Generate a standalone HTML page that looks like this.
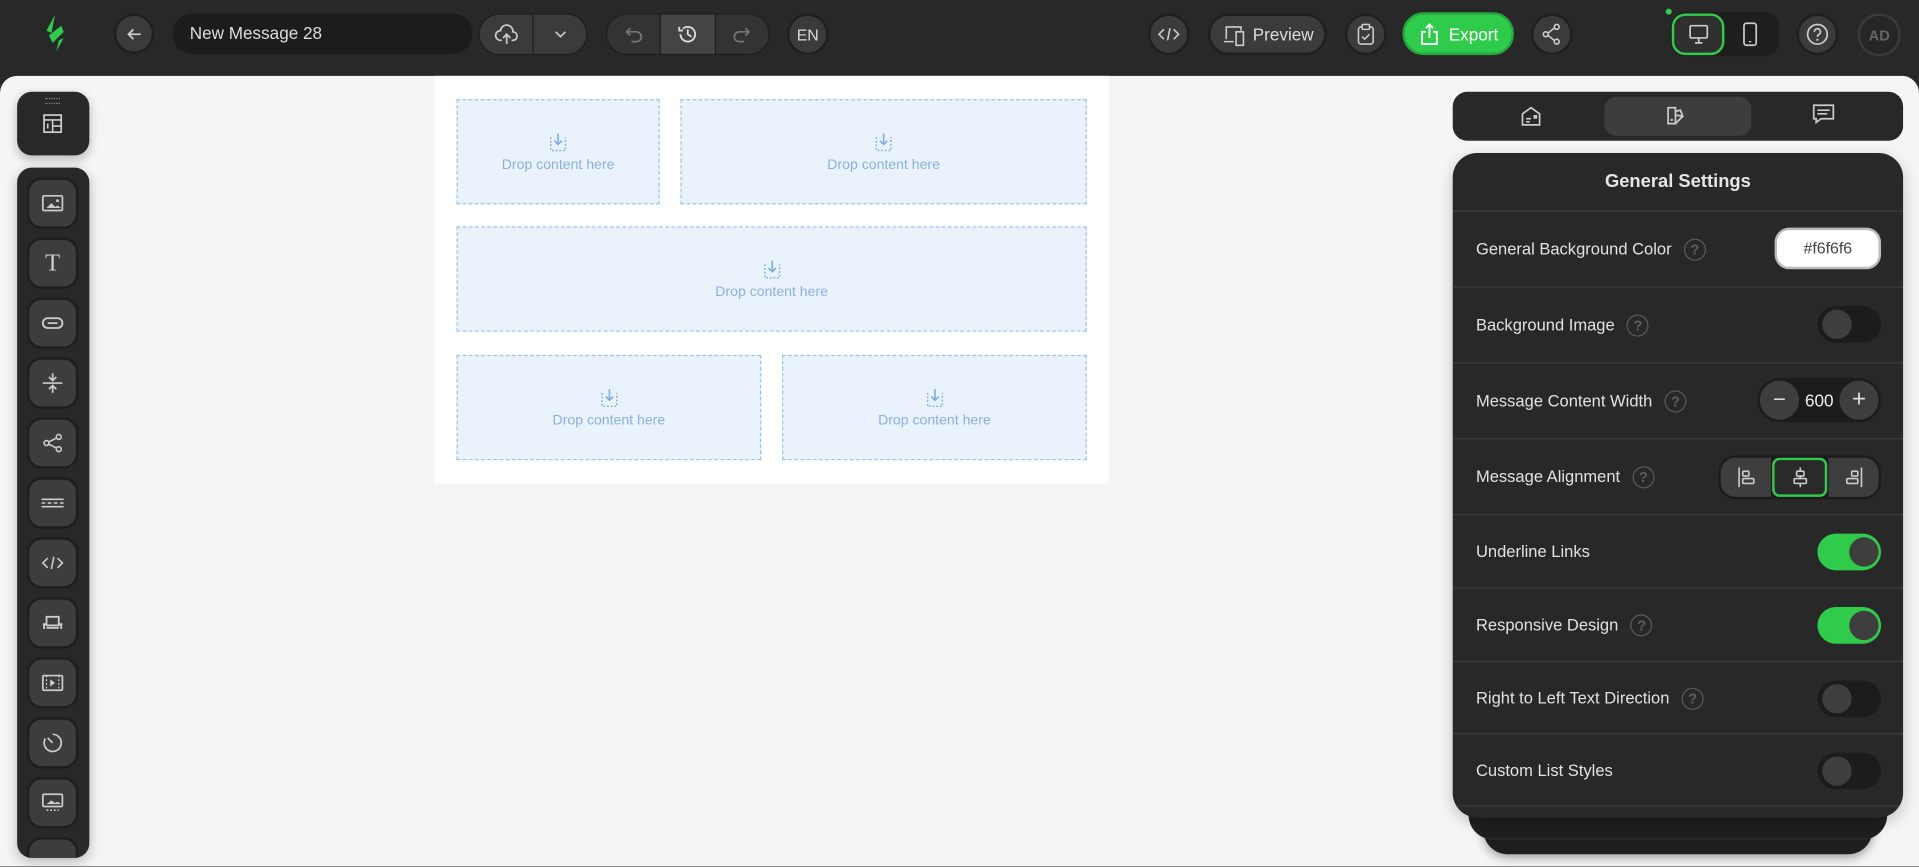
<!DOCTYPE html>
<html><head><meta charset="utf-8"><style>
*{box-sizing:border-box;margin:0;padding:0}
html,body{width:1919px;height:867px;overflow:hidden;background:#282828;font-family:"Liberation Sans",sans-serif}
#w{position:absolute;left:0;top:0;width:1568px;height:708px;transform:scale(1.22385);transform-origin:0 0;background:#282828}
.a{position:absolute}
.btn{position:absolute;background:#3b3b3b;border:2px solid #1f1f1f;border-radius:17px;display:flex;align-items:center;justify-content:center;color:#ddd;font-size:14px}
.grp{position:absolute;background:#1e1e1e;border-radius:18px;display:flex;padding:1px;gap:1px}
.grp>div{background:#3b3b3b;display:flex;align-items:center;justify-content:center}
svg{display:block}
.drop{position:absolute;background:#eaf2fc;border:1px dashed #9cc3ee;display:flex;flex-direction:column;align-items:center;justify-content:center;color:#8ab0e0;font-size:11.5px}
.drop svg{margin-bottom:5px}
.tb{position:absolute;left:22px;width:42px;height:42px;background:#3d3d3d;border:2px solid #1e1e1e;border-radius:12px;display:flex;align-items:center;justify-content:center}
.row{position:absolute;left:0;right:0;border-top:1px solid #3c3c3c;display:flex;align-items:center;padding-left:19px;color:#e2e2e2;font-size:13.5px}
.q{display:inline-flex;width:18px;height:18px;border:1.5px solid #5a5a5a;border-radius:50%;color:#5f5f5f;font-size:12px;align-items:center;justify-content:center;margin-left:10px;font-weight:bold}
.tog{position:absolute;right:18px;width:52px;height:30px;border-radius:15px;background:#1c1c1c}
.tog:after{content:"";position:absolute;left:4px;top:3px;width:24px;height:24px;border-radius:50%;background:#3e3e3e}
.tog.on{background:#2fcc4c}
.tog.on:after{left:26px}
</style></head><body><div id="w">
<svg class="a" style="left:34px;top:11px" width="22" height="32" viewBox="0 0 22 32"><path d="M11 1 L4 14 L8 16 Z M16 10 L6 18 L9 24 L18 15 Z M14 22 L12 31 L18 20 Z" fill="#2fcc4c"/></svg>
<div class="btn" style="left:93px;top:11px;width:33px;height:33px"><svg width="14" height="14" viewBox="0 0 14 14"><path d="M12 7H2M6 3L2 7l4 4" stroke="#ccc" stroke-width="1.5" fill="none"/></svg></div>
<div class="a" style="left:141px;top:11px;width:245px;height:33px;background:#1c1c1c;border-radius:16px;color:#ddd;font-size:14px;line-height:33px;padding-left:14px">New Message 28</div>
<div class="grp" style="left:391px;top:11px;width:89px;height:34px"><div style="width:43px;border-radius:16px 0 0 16px"><svg width="20" height="18" viewBox="0 0 20 18"><path d="M6 14H5a4 4 0 0 1 0-8 5 5 0 0 1 10 1 3.5 3.5 0 0 1 0 7h-1M10 17V9M7 12l3-3 3 3" stroke="#ccc" stroke-width="1.4" fill="none"/></svg></div><div style="width:43px;border-radius:0 16px 16px 0"><svg width="10" height="6"><path d="M1 1l4 4 4-4" stroke="#ccc" stroke-width="1.4" fill="none"/></svg></div></div>
<div class="grp" style="left:495px;top:11px;width:134px;height:34px"><div style="width:44px;border-radius:16px 0 0 16px;background:#333"><svg width="16" height="16" viewBox="0 0 16 16"><path d="M5 3L2 6l3 3M2 6h8a4 4 0 0 1 0 8H6" stroke="#777" stroke-width="1.4" fill="none"/></svg></div><div style="width:44px;background:#444"><svg width="18" height="18" viewBox="0 0 18 18"><path d="M3 9a6 6 0 1 0 2-4.5M2 3v3h3M9 5v4l3 2" stroke="#ddd" stroke-width="1.5" fill="none"/></svg></div><div style="width:44px;border-radius:0 16px 16px 0;background:#333"><svg width="16" height="16" viewBox="0 0 16 16"><path d="M11 3l3 3-3 3M14 6H6a4 4 0 0 0 0 8h4" stroke="#777" stroke-width="1.4" fill="none"/></svg></div></div>
<div class="btn" style="left:643px;top:11px;width:34px;height:34px;font-size:13px">EN</div>
<div class="btn" style="left:938px;top:11px;width:34px;height:34px"><svg width="18" height="12" viewBox="0 0 18 12"><path d="M5 2L1 6l4 4M13 2l4 4-4 4M10 1L8 11" stroke="#ccc" stroke-width="1.3" fill="none"/></svg></div>
<div class="btn" style="left:987px;top:11px;width:97px;height:34px;gap:6px"><svg width="20" height="20" viewBox="0 0 20 20"><path d="M4 14V4h12v3M2 16h8M12 8h6v11h-6z" stroke="#ccc" stroke-width="1.3" fill="none"/></svg>Preview</div>
<div class="btn" style="left:1099px;top:11px;width:34px;height:34px"><svg width="16" height="18" viewBox="0 0 16 18"><rect x="2" y="3" width="12" height="14" rx="2" stroke="#ccc" stroke-width="1.3" fill="none"/><rect x="5" y="1" width="6" height="4" rx="1" stroke="#ccc" stroke-width="1.3" fill="#3b3b3b"/><path d="M5 11l2 2 4-4" stroke="#ccc" stroke-width="1.3" fill="none"/></svg></div>
<div class="btn" style="left:1146px;top:10px;width:91px;height:35px;background:#2fcc4c;border-color:#24a83d;color:#fff;gap:7px;font-size:14px"><svg width="18" height="20" viewBox="0 0 18 20"><path d="M6 8H3v10h12V8h-3M9 13V2M6 5l3-3 3 3" stroke="#fff" stroke-width="1.5" fill="none"/></svg>Export</div>
<div class="btn" style="left:1251px;top:11px;width:34px;height:34px"><svg width="16" height="18" viewBox="0 0 16 18"><circle cx="12" cy="3" r="2" stroke="#ccc" fill="none" stroke-width="1.3"/><circle cx="3" cy="9" r="2" stroke="#ccc" fill="none" stroke-width="1.3"/><circle cx="12" cy="15" r="2" stroke="#ccc" fill="none" stroke-width="1.3"/><path d="M5 8l5-4M5 10l5 4" stroke="#ccc" stroke-width="1.3"/></svg></div>
<div class="a" style="left:1361px;top:7px;width:5px;height:5px;border-radius:50%;background:#2fcc4c"></div>
<div class="a" style="left:1365px;top:10px;width:89px;height:36px;background:#1e1e1e;border-radius:12px"></div>
<div class="a" style="left:1366px;top:11px;width:43px;height:34px;background:#303030;border:2px solid #2fcc4c;border-radius:11px;display:flex;align-items:center;justify-content:center"><svg width="18" height="18" viewBox="0 0 18 18"><rect x="2" y="2" width="14" height="10" rx="1" stroke="#ccc" stroke-width="1.4" fill="none"/><path d="M9 12v4M6 16h6" stroke="#ccc" stroke-width="1.4"/></svg></div>
<svg class="a" style="left:1424px;top:18px" width="12" height="20" viewBox="0 0 12 20"><rect x="1" y="1" width="10" height="18" rx="2" stroke="#ccc" stroke-width="1.4" fill="none"/><path d="M5 16h2" stroke="#ccc"/></svg>
<div class="btn" style="left:1468px;top:11px;width:34px;height:34px"><svg width="20" height="20" viewBox="0 0 20 20"><circle cx="10" cy="10" r="8" stroke="#ccc" stroke-width="1.4" fill="none"/><path d="M7.5 8a2.5 2.5 0 1 1 3.5 2.3c-.7.3-1 .8-1 1.7" stroke="#ccc" stroke-width="1.4" fill="none"/><circle cx="10" cy="14.5" r=".9" fill="#ccc"/></svg></div>
<div class="btn" style="left:1518px;top:11px;width:35px;height:35px;background:#262626;border-color:#3a3a3a;color:#666;font-weight:bold;font-size:12px">AD</div>

<div class="a" style="left:0;top:62px;width:1568px;height:646px;background:#f5f5f5;border-radius:14px 14px 0 0"></div>
<div class="a" style="left:355px;top:62px;width:551px;height:333px;background:#fff"></div>
<div class="drop" style="left:373px;top:81px;width:166px;height:86px"><svg width="16" height="16" viewBox="0 0 16 16"><path d="M8 1v9M5 7l3 3 3-3" stroke="#7aaee8" stroke-width="1.3" fill="none"/><path d="M2 4v11h12V4" stroke="#7aaee8" stroke-width="1.2" stroke-dasharray="1.5 1.5" fill="none"/></svg>Drop content here</div>
<div class="drop" style="left:556px;top:81px;width:332px;height:86px"><svg width="16" height="16" viewBox="0 0 16 16"><path d="M8 1v9M5 7l3 3 3-3" stroke="#7aaee8" stroke-width="1.3" fill="none"/><path d="M2 4v11h12V4" stroke="#7aaee8" stroke-width="1.2" stroke-dasharray="1.5 1.5" fill="none"/></svg>Drop content here</div>
<div class="drop" style="left:373px;top:185px;width:515px;height:86px"><svg width="16" height="16" viewBox="0 0 16 16"><path d="M8 1v9M5 7l3 3 3-3" stroke="#7aaee8" stroke-width="1.3" fill="none"/><path d="M2 4v11h12V4" stroke="#7aaee8" stroke-width="1.2" stroke-dasharray="1.5 1.5" fill="none"/></svg>Drop content here</div>
<div class="drop" style="left:373px;top:290px;width:249px;height:86px"><svg width="16" height="16" viewBox="0 0 16 16"><path d="M8 1v9M5 7l3 3 3-3" stroke="#7aaee8" stroke-width="1.3" fill="none"/><path d="M2 4v11h12V4" stroke="#7aaee8" stroke-width="1.2" stroke-dasharray="1.5 1.5" fill="none"/></svg>Drop content here</div>
<div class="drop" style="left:639px;top:290px;width:249px;height:86px"><svg width="16" height="16" viewBox="0 0 16 16"><path d="M8 1v9M5 7l3 3 3-3" stroke="#7aaee8" stroke-width="1.3" fill="none"/><path d="M2 4v11h12V4" stroke="#7aaee8" stroke-width="1.2" stroke-dasharray="1.5 1.5" fill="none"/></svg>Drop content here</div>

<div class="a" style="left:14px;top:75px;width:59px;height:52px;background:#282828;border-radius:12px;box-shadow:0 3px 8px rgba(0,0,0,.25)"><div style="position:absolute;left:23px;top:5px;width:12px;height:5px;border-top:1.5px dotted #888;border-bottom:1.5px dotted #888"></div><svg style="position:absolute;left:20px;top:17px" width="18" height="18" viewBox="0 0 18 18"><rect x="2" y="2" width="14" height="14" stroke="#ccc" stroke-width="1.4" fill="none"/><path d="M2 6h14M9 6v10M9 11h7M5 9v4" stroke="#ccc" stroke-width="1.3"/></svg></div>
<div class="a" style="left:14px;top:137px;width:59px;height:564px;background:#282828;border-radius:12px;box-shadow:0 3px 10px rgba(0,0,0,.25);overflow:hidden">
<div class="tb" style="left:8px;top:8px"><svg width="20" height="16" viewBox="0 0 20 16"><rect x="2" y="2" width="16" height="12" rx="1" stroke="#ccc" stroke-width="1.4" fill="none"/><path d="M5 12l4-4 3 3 2-1 3 2z" fill="#ccc"/><circle cx="14" cy="6" r="1.2" fill="#ccc"/></svg></div>
<div class="tb" style="left:8px;top:57px;color:#ccc;font-family:'Liberation Serif',serif;font-size:20px">T</div>
<div class="tb" style="left:8px;top:106px"><svg width="20" height="12" viewBox="0 0 20 12"><rect x="2" y="2" width="16" height="8" rx="4" stroke="#ccc" stroke-width="1.5" fill="none"/><path d="M6 6h8" stroke="#ccc" stroke-width="1.4"/></svg></div>
<div class="tb" style="left:8px;top:155px"><svg width="20" height="20" viewBox="0 0 20 20"><path d="M2 10h16M10 2v5M7 5l3 3 3-3M10 18v-5M7 15l3-3 3 3" stroke="#ccc" stroke-width="1.4" fill="none"/></svg></div>
<div class="tb" style="left:8px;top:204px"><svg width="18" height="18" viewBox="0 0 18 18"><circle cx="14" cy="4" r="2" stroke="#ccc" fill="none" stroke-width="1.3"/><circle cx="4" cy="9" r="2" stroke="#ccc" fill="none" stroke-width="1.3"/><circle cx="14" cy="14" r="2" stroke="#ccc" fill="none" stroke-width="1.3"/><path d="M6 8l6-3M6 10l6 3" stroke="#ccc" stroke-width="1.3"/></svg></div>
<div class="tb" style="left:8px;top:253px"><svg width="22" height="12" viewBox="0 0 22 12"><path d="M2 3h18M2 9h18" stroke="#ccc" stroke-width="1.3"/><path d="M2 6h18" stroke="#ccc" stroke-width="1.3" stroke-dasharray="3 2"/></svg></div>
<div class="tb" style="left:8px;top:302px"><svg width="18" height="12" viewBox="0 0 18 12"><path d="M5 2L1 6l4 4M13 2l4 4-4 4M10 1L8 11" stroke="#ccc" stroke-width="1.3" fill="none"/></svg></div>
<div class="tb" style="left:8px;top:351px"><svg width="20" height="16" viewBox="0 0 20 16"><path d="M5 3h10v7H5zM2 9h3M15 9h3M3 9v4M17 9v4M5 12h10" stroke="#ccc" stroke-width="1.5" fill="none"/></svg></div>
<div class="tb" style="left:8px;top:400px"><svg width="20" height="16" viewBox="0 0 20 16"><rect x="2" y="2" width="16" height="12" rx="1" stroke="#ccc" stroke-width="1.4" fill="none"/><path d="M5 2v12M15 2v12" stroke="#ccc" stroke-width="1" stroke-dasharray="1.5 1.5"/><path d="M8 5l4 3-4 3z" fill="#ccc"/></svg></div>
<div class="tb" style="left:8px;top:449px"><svg width="18" height="18" viewBox="0 0 18 18"><path d="M9 2a7 7 0 1 1-6 3.5" stroke="#ccc" stroke-width="1.4" fill="none"/><path d="M5 5l4 4" stroke="#ccc" stroke-width="1.4"/></svg></div>
<div class="tb" style="left:8px;top:498px"><svg width="20" height="18" viewBox="0 0 20 18"><rect x="2" y="2" width="16" height="10" rx="1" stroke="#ccc" stroke-width="1.4" fill="none"/><path d="M5 10l4-3 3 2 2-1 3 2z" fill="#ccc"/><path d="M5 15h10" stroke="#ccc" stroke-width="1.3" stroke-dasharray="1.5 1.5"/></svg></div>
<div class="tb" style="left:8px;top:547px"><svg width="20" height="10"><path d="M3 2l3 2-3 2M9 4h9" stroke="#ccc" stroke-width="1.3" fill="none"/></svg></div>
</div>

<div class="a" style="left:1187px;top:75px;width:368px;height:40px;background:#282828;border-radius:12px"></div>
<div class="a" style="left:1311px;top:79px;width:120px;height:32px;background:#3d3d3d;border-radius:10px"></div>
<svg class="a" style="left:1241px;top:85px" width="20" height="20" viewBox="0 0 20 20"><path d="M3 8l7-5 7 5v9H3z" stroke="#ccc" stroke-width="1.4" fill="none"/><path d="M6 12h4M6 14.5h3" stroke="#ccc" stroke-width="1.3"/><rect x="12" y="9" width="3" height="3" fill="#ccc"/></svg>
<svg class="a" style="left:1360px;top:85px" width="20" height="20" viewBox="0 0 20 20"><path d="M3 3h6v13H3zM9 6l4-1 2 5-6 6M9 9l6 1" stroke="#ccc" stroke-width="1.4" fill="none"/><circle cx="6" cy="13" r="1" fill="#ccc"/></svg>
<svg class="a" style="left:1480px;top:84px" width="20" height="20" viewBox="0 0 20 20"><path d="M2 2h16v11H8l-4 3v-3H2z" stroke="#ccc" stroke-width="1.4" fill="none"/><path d="M5 6h10M5 9h8" stroke="#ccc" stroke-width="1.3"/></svg>

<div class="a" style="left:1212px;top:660px;width:318px;height:38px;background:#1e1e1e;border-radius:0 0 20px 20px;box-shadow:0 3px 8px rgba(0,0,0,.35)"></div>
<div class="a" style="left:1200px;top:655px;width:342px;height:31px;background:#1f1f1f;border-radius:0 0 20px 20px;border-bottom:1px solid #2a2a2a"></div>
<div class="a" style="left:1187px;top:125px;width:368px;height:543px;background:#282828;border-radius:20px;box-shadow:0 4px 12px rgba(0,0,0,.2);overflow:hidden">
<div class="a" style="left:0;right:0;top:15px;text-align:center;color:#e6e6e6;font-size:15px;font-weight:bold">General Settings</div>
<div class="row" style="top:47px;height:62px">General Background Color<span class="q">?</span><div class="a" style="right:18px;top:13px;width:87px;height:34px;background:#fff;border:2px solid #bbb;border-radius:12px;color:#444;font-size:13px;text-align:center;line-height:30px">#f6f6f6</div></div>
<div class="row" style="top:109px;height:62px">Background Image<span class="q">?</span><div class="tog" style="top:15px"></div></div>
<div class="row" style="top:171px;height:62px">Message Content Width<span class="q">?</span><div class="a" style="right:18px;top:12px;width:101px;height:36px;background:#1c1c1c;border-radius:18px"><div class="a" style="left:2px;top:2px;width:32px;height:32px;border-radius:50%;background:#3e3e3e;color:#ddd;text-align:center;line-height:30px;font-size:18px">−</div><div class="a" style="left:34px;width:33px;top:0;line-height:36px;text-align:center;color:#eee;font-size:14px">600</div><div class="a" style="left:67px;top:2px;width:32px;height:32px;border-radius:50%;background:#3e3e3e;color:#ddd;text-align:center;line-height:30px;font-size:20px">+</div></div></div>
<div class="row" style="top:233px;height:62px">Message Alignment<span class="q">?</span><div class="a" style="right:18px;top:13px;width:133px;height:36px;background:#1c1c1c;border-radius:14px;display:flex;padding:2px;gap:1px"><div style="flex:1;background:#3e3e3e;border-radius:12px 0 0 12px;display:flex;align-items:center;justify-content:center"><svg width="16" height="18" viewBox="0 0 16 18"><path d="M2 1v16" stroke="#ccc" stroke-width="1.3"/><rect x="5" y="4" width="5" height="4" rx="1" stroke="#ccc" fill="none" stroke-width="1.3"/><rect x="5" y="10" width="9" height="4" rx="1" stroke="#ccc" fill="none" stroke-width="1.3"/></svg></div><div style="flex:1;background:#2a2a2a;border:2px solid #2fcc4c;border-radius:6px;display:flex;align-items:center;justify-content:center"><svg width="16" height="18" viewBox="0 0 16 18"><path d="M8 1v16" stroke="#ccc" stroke-width="1.3"/><rect x="5" y="4" width="6" height="4" rx="1" stroke="#ccc" fill="#2a2a2a" stroke-width="1.3"/><rect x="3" y="10" width="10" height="4" rx="1" stroke="#ccc" fill="#2a2a2a" stroke-width="1.3"/></svg></div><div style="flex:1;background:#3e3e3e;border-radius:0 12px 12px 0;display:flex;align-items:center;justify-content:center"><svg width="16" height="18" viewBox="0 0 16 18"><path d="M14 1v16" stroke="#ccc" stroke-width="1.3"/><rect x="6" y="4" width="5" height="4" rx="1" stroke="#ccc" fill="none" stroke-width="1.3"/><rect x="2" y="10" width="9" height="4" rx="1" stroke="#ccc" fill="none" stroke-width="1.3"/></svg></div></div></div>
<div class="row" style="top:295px;height:60px">Underline Links<div class="tog on" style="top:15px"></div></div>
<div class="row" style="top:355px;height:60px">Responsive Design<span class="q">?</span><div class="tog on" style="top:15px"></div></div>
<div class="row" style="top:415px;height:60px">Right to Left Text Direction<span class="q">?</span><div class="tog" style="top:15px"></div></div>
<div class="row" style="top:474px;height:60px">Custom List Styles<div class="tog" style="top:15px"></div></div>
<div class="row" style="top:533px;height:20px"></div>
</div>
</div></body></html>
